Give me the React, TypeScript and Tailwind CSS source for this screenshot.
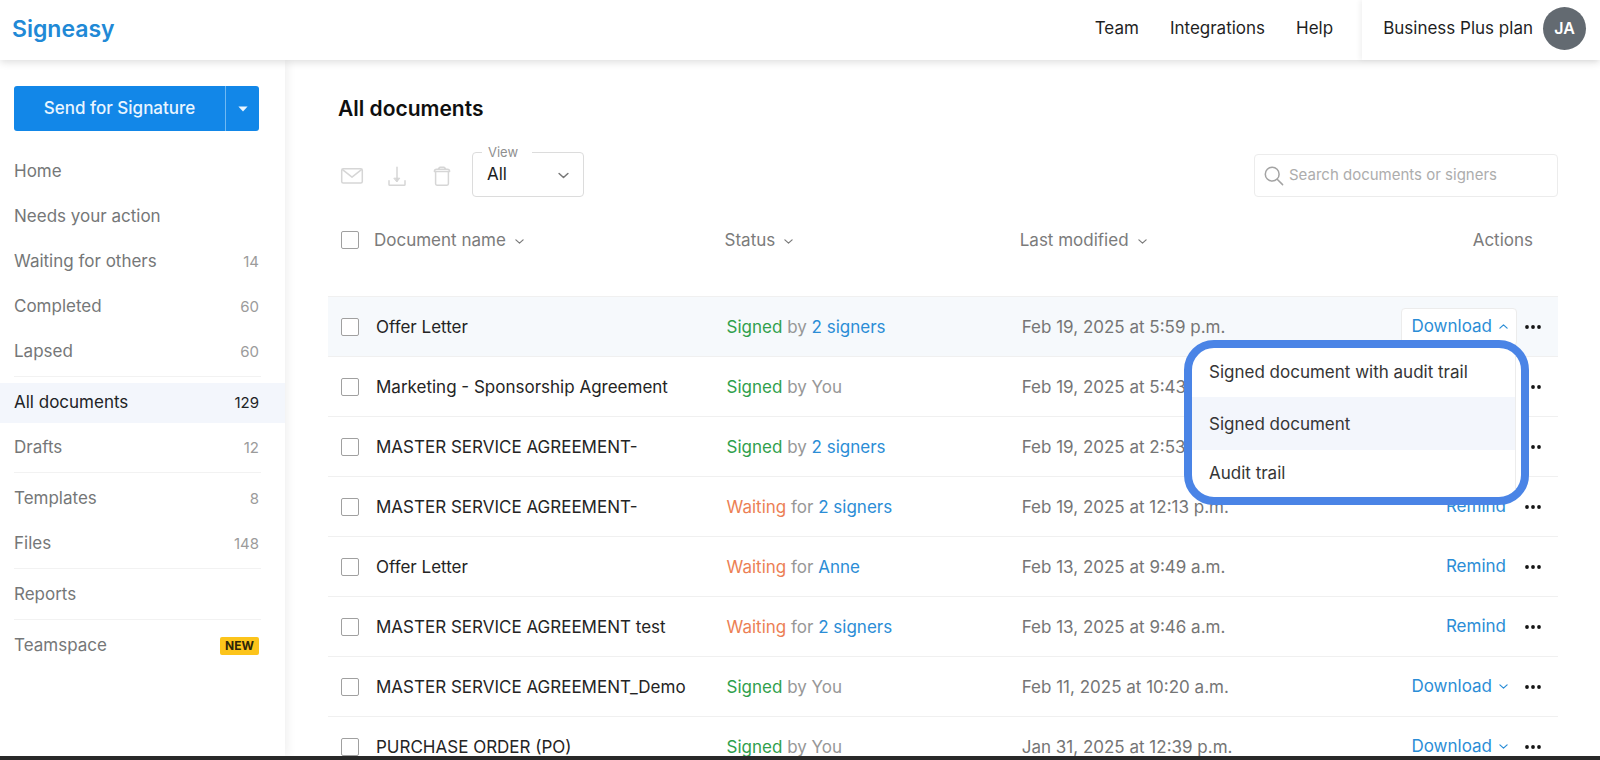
import React from "react";

type NavItem = { label: string; count?: string; badge?: string; active?: boolean };

const navGroups: NavItem[][] = [
  [
    { label: "Home" },
    { label: "Needs your action" },
    { label: "Waiting for others", count: "14" },
    { label: "Completed", count: "60" },
    { label: "Lapsed", count: "60" },
  ],
  [
    { label: "All documents", count: "129", active: true },
    { label: "Drafts", count: "12" },
  ],
  [
    { label: "Templates", count: "8" },
    { label: "Files", count: "148" },
  ],
  [{ label: "Reports" }],
  [{ label: "Teamspace", badge: "NEW" }],
];

type Doc = {
  name: string;
  state: "Signed" | "Waiting";
  who: string;
  date: string;
  action?: "Download" | "Remind";
  open?: boolean;
};

const docs: Doc[] = [
  { name: "Offer Letter", state: "Signed", who: "2 signers", date: "Feb 19, 2025 at 5:59 p.m.", action: "Download", open: true },
  { name: "Marketing - Sponsorship Agreement", state: "Signed", who: "You", date: "Feb 19, 2025 at 5:43 p.m." },
  { name: "MASTER SERVICE AGREEMENT-", state: "Signed", who: "2 signers", date: "Feb 19, 2025 at 2:53 p.m." },
  { name: "MASTER SERVICE AGREEMENT-", state: "Waiting", who: "2 signers", date: "Feb 19, 2025 at 12:13 p.m.", action: "Remind" },
  { name: "Offer Letter", state: "Waiting", who: "Anne", date: "Feb 13, 2025 at 9:49 a.m.", action: "Remind" },
  { name: "MASTER SERVICE AGREEMENT test", state: "Waiting", who: "2 signers", date: "Feb 13, 2025 at 9:46 a.m.", action: "Remind" },
  { name: "MASTER SERVICE AGREEMENT_Demo", state: "Signed", who: "You", date: "Feb 11, 2025 at 10:20 a.m.", action: "Download" },
  { name: "PURCHASE ORDER (PO)", state: "Signed", who: "You", date: "Jan 31, 2025 at 12:39 p.m.", action: "Download" },
];

function Chevron({ up = false, className = "" }: { up?: boolean; className?: string }) {
  return (
    <svg viewBox="0 0 10 10" className={className} fill="none" stroke="currentColor" strokeWidth="1.4" strokeLinecap="round" strokeLinejoin="round" aria-hidden="true">
      <path d={up ? "M1 6.8 5 3.2 9 6.8" : "M1 3.2 5 6.8 9 3.2"} />
    </svg>
  );
}

function Checkbox({ label }: { label: string }) {
  return (
    <input
      type="checkbox"
      aria-label={label}
      className="ml-[13px] block size-[18px] appearance-none rounded-[2px] border border-[#a0a0a0] bg-white checked:bg-[#1287e8]"
    />
  );
}

function Header() {
  return (
    <header className="relative z-20 flex h-[60px] shrink-0 items-stretch justify-between bg-white shadow-[0_2px_8px_rgba(0,0,0,0.14)]">
      <a href="#" className="flex items-center pb-[2px] pl-3 text-[23px] font-semibold text-[#2189d6]">
        Signeasy
      </a>
      <div className="flex">
        <nav className="flex items-center gap-[31px] pb-[2px] pr-[29px] text-[17px] text-[#1f1f1f]">
          <a href="#">Team</a>
          <a href="#">Integrations</a>
          <a href="#">Help</a>
        </nav>
        <div className="flex items-center gap-[10px] pb-1 pl-[21px] pr-[14px] shadow-[-2px_0_5px_rgba(0,0,0,0.06)]">
          <span className="pt-[2px] text-[17px] text-[#1f1f1f]">Business Plus plan</span>
          <button type="button" className="size-[43px] rounded-full bg-[#636a71] text-base font-semibold text-white">
            JA
          </button>
        </div>
      </div>
    </header>
  );
}

function Sidebar() {
  return (
    <aside className="z-10 w-[285px] shrink-0 bg-white pt-[26px] shadow-[2px_0_10px_rgba(0,0,0,0.07)]">
      <div className="ml-[14px] mr-[26px] flex h-[45px] overflow-hidden rounded-[3px] bg-[#1287e8] text-[#e9f5ff]">
        <button type="button" className="flex-1 text-[17px] font-medium">
          Send for Signature
        </button>
        <button type="button" aria-label="More send options" className="flex w-[34px] items-center justify-center border-l border-[#6fb9f3]">
          <svg viewBox="0 0 10 6" className="h-[6px] w-[10px]" fill="currentColor" aria-hidden="true">
            <path d="M.4.5h9.2L5 5.6z" />
          </svg>
        </button>
      </div>
      <nav className="mt-[21px] flex flex-col gap-[5px]">
        {navGroups.map((group, i) => (
          <React.Fragment key={group[0].label}>
            {i > 0 && <hr className="-mt-px mb-px ml-[14px] mr-6 border-t border-[#f2f2f2]" />}
            {group.map((item) => (
              <a
                key={item.label}
                href="#"
                className={`flex h-10 items-center justify-between pl-[14px] pr-[26px] text-[17px] ${
                  item.active ? "bg-[#f3f6fc] text-[#212326]" : "text-[#757778]"
                }`}
              >
                {item.label}
                {item.count && (
                  <span className={`text-[15px] ${item.active ? "text-[#212326]" : "text-[#9b9b9b]"}`}>{item.count}</span>
                )}
                {item.badge && (
                  <span className="flex h-[18px] items-center rounded-[2px] bg-[#fcc41b] px-[5px] text-xs font-bold text-[#2d2508]">
                    {item.badge}
                  </span>
                )}
              </a>
            ))}
          </React.Fragment>
        ))}
      </nav>
    </aside>
  );
}

function Toolbar() {
  return (
    <div className="flex items-end justify-between">
      <div className="flex items-end">
        <div className="flex h-[43px] items-center gap-[21px] pl-3 text-[#d6d6d6]">
          <button type="button" aria-label="Email">
            <svg viewBox="0 0 24 24" className="size-6" fill="none" stroke="currentColor" strokeWidth="1.5" strokeLinejoin="round">
              <rect x="1.7" y="4.7" width="20.6" height="14.4" rx="1.5" />
              <path d="M2.2 5.4 12 13.2l9.8-7.8" />
            </svg>
          </button>
          <button type="button" aria-label="Download">
            <svg viewBox="0 0 24 24" className="size-6" fill="none" stroke="currentColor" strokeWidth="1.5" strokeLinecap="round" strokeLinejoin="round">
              <path d="M12 3.2v14M4 16.8v3.6q0 .8.8.8h14.4q.8 0 .8-.8v-3.6" />
              <path d="M9.2 14.2h5.6L12 17.6z" fill="currentColor" strokeWidth="1" />
            </svg>
          </button>
          <button type="button" aria-label="Delete">
            <svg viewBox="0 0 24 24" className="size-6" fill="none" stroke="currentColor" strokeWidth="1.5" strokeLinecap="round" strokeLinejoin="round">
              <path d="M4.4 7.4q0-2.2 2.2-2.2h10.8q2.2 0 2.2 2.2zM8.4 5l.9-1.3q.3-.4.8-.4h3.8q.5 0 .8.4l.9 1.3M5.6 7.6v12.2q0 1.4 1.4 1.4h10q1.4 0 1.4-1.4V7.6" />
            </svg>
          </button>
        </div>
        <fieldset className="relative ml-[18px] h-[54px] w-[112px] rounded-[4px] border border-[#dcdcdc]">
          <legend className="ml-[9px] w-[50px] pl-[6px] text-[13px] leading-[18px] text-[#8f8f8f]">
            <label htmlFor="view">View</label>
          </legend>
          <select id="view" className="block h-7 w-full appearance-none bg-transparent pl-[14px] text-[17px] text-[#1c1c1c] outline-none">
            <option>All</option>
            <option>Signed</option>
            <option>Waiting</option>
          </select>
          <Chevron className="pointer-events-none absolute right-[14px] top-[9px] size-[11px] text-[#777]" />
        </fieldset>
      </div>
      <div className="flex h-[43px] w-[304px] items-center gap-[5px] rounded-[4px] border border-[#ececec] px-[9px]">
        <svg viewBox="0 0 20 20" className="size-5 shrink-0 text-[#a3a3a3]" fill="none" stroke="currentColor" strokeWidth="1.5" strokeLinecap="round" aria-hidden="true">
          <circle cx="8.2" cy="8.2" r="6.9" />
          <path d="m13.2 13.2 5.4 5.4" />
        </svg>
        <input
          type="search"
          aria-label="Search documents or signers"
          placeholder="Search documents or signers"
          className="min-w-0 flex-1 bg-transparent text-[15px] text-[#333] outline-none placeholder:text-[#adadad]"
        />
      </div>
    </div>
  );
}

function DownloadMenu() {
  return (
    <div role="menu" className="absolute right-[29px] top-[43px] z-10 w-[345px] overflow-hidden rounded-[30px] border-8 border-[#4a84e6] bg-white text-left text-[17px] text-[#353535]">
      <div className="mr-[5px] flex flex-col border-r border-[#ececec]">
        <button type="button" role="menuitem" className="h-[49px] pl-[17px] text-left">
          Signed document with audit trail
        </button>
        <button type="button" role="menuitem" className="h-[53px] bg-[#f3f6fc] pl-[17px] pt-[2px] text-left">
          Signed document
        </button>
        <button type="button" role="menuitem" className="h-[47px] pl-[17px] text-left">
          Audit trail
        </button>
      </div>
    </div>
  );
}

function SortHeader({ children }: { children: React.ReactNode }) {
  return (
    <button type="button" className="flex items-center gap-[9px]">
      {children}
      <Chevron className="size-[9px]" />
    </button>
  );
}

function DocRow({ doc }: { doc: Doc }) {
  const cell = "h-[60px] border-t border-[#f0f0f0]";
  return (
    <tr className={doc.open ? "bg-[#f6f9fc]" : ""}>
      <td className={cell}>
        <Checkbox label={`Select ${doc.name}`} />
      </td>
      <td className={`${cell} pl-[2px] pt-[2px] text-[#242424]`}>{doc.name}</td>
      <td className={`${cell} pl-[2px] pt-[2px] text-[#979797]`}>
        <span className={doc.state === "Signed" ? "text-[#30a04c]" : "text-[#ec7f55]"}>{doc.state}</span>{" "}
        {doc.state === "Signed" ? "by" : "for"}{" "}
        {doc.who === "You" ? "You" : <a href="#" className="text-[#2b8dd6]">{doc.who}</a>}
      </td>
      <td className={`${cell} pl-[2px] pt-[2px] text-[#757575]`}>{doc.date}</td>
      <td className={`${cell} relative`}>
        <div className="flex items-center justify-end pr-4">
          {doc.action === "Download" && (
            <button
              type="button"
              className={`flex h-[38px] items-center gap-[7px] rounded-[4px] border pl-[9px] pr-2 text-[#2b8dd6] ${
                doc.open ? "border-[#ececec] bg-white" : "border-transparent"
              }`}
            >
              Download
              <Chevron up={doc.open} className="size-[9px]" />
            </button>
          )}
          {doc.action === "Remind" && (
            <button type="button" className="mr-[11px] h-[38px] text-[#2b8dd6]">
              Remind
            </button>
          )}
          <button type="button" aria-label={`More actions for ${doc.name}`} className="ml-[7px] flex h-[38px] items-center">
            <svg viewBox="0 0 18 6" className="h-[6px] w-[18px]" fill="#161616" aria-hidden="true">
              <circle cx="3" cy="3" r="1.9" />
              <circle cx="9" cy="3" r="1.9" />
              <circle cx="15" cy="3" r="1.9" />
            </svg>
          </button>
        </div>
        {doc.open && <DownloadMenu />}
      </td>
    </tr>
  );
}

export default function App() {
  return (
    <div className="flex h-screen flex-col overflow-hidden border-b-4 border-[#292929] bg-white font-['Inter','Liberation_Sans',sans-serif]">
      <Header />
      <div className="flex min-h-0 flex-1">
        <Sidebar />
        <main className="min-w-0 flex-1 overflow-hidden pl-[43px] pr-[42px] pt-[34px]">
          <h1 className="pl-[10px] text-[21px] font-semibold leading-[30px] text-[#0f0f0f]">All documents</h1>
          <div className="mt-[19px]">
            <Toolbar />
          </div>
          <table className="mt-[13px] w-full table-fixed border-separate border-spacing-0 text-[17px]">
            <colgroup>
              <col className="w-[46px]" />
              <col className="w-[28.5%]" />
              <col className="w-[24%]" />
              <col />
              <col className="w-[17%]" />
            </colgroup>
            <thead>
              <tr className="h-[86px] text-left text-[#7b7b7b] *:pb-[26px] *:font-normal">
                <th>
                  <Checkbox label="Select all documents" />
                </th>
                <th className="pt-[2px]">
                  <SortHeader>Document name</SortHeader>
                </th>
                <th className="pt-[2px]">
                  <SortHeader>Status</SortHeader>
                </th>
                <th className="pt-[2px]">
                  <SortHeader>Last modified</SortHeader>
                </th>
                <th className="pr-[25px] pt-[2px] text-right">Actions</th>
              </tr>
            </thead>
            <tbody>
              {docs.map((doc) => (
                <DocRow key={doc.name + doc.date} doc={doc} />
              ))}
            </tbody>
          </table>
        </main>
      </div>
    </div>
  );
}
